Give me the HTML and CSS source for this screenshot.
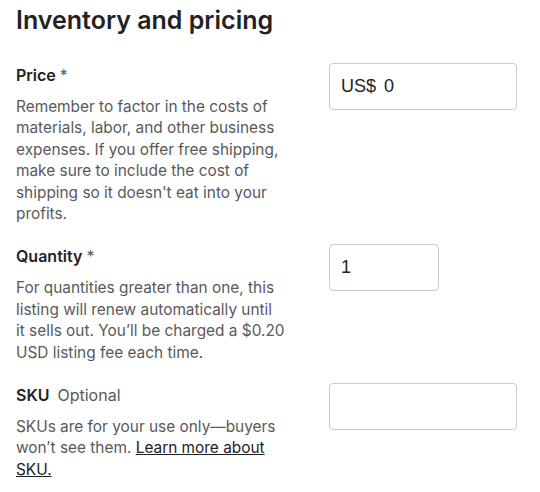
FILE: index.html
```html
<!DOCTYPE html>
<html>
<head>
<meta charset="utf-8">
<link rel="stylesheet" href="styles.css">
</head>
<body>
<div class="page">
  <h1 class="title">Inventory and pricing</h1>
  <div class="row">
    <div class="info">
      <div class="label">Price <span class="req">*</span></div>
      <p class="desc">Remember to factor in the costs of materials, labor, and other business expenses. If you offer free shipping, make sure to include the cost of shipping so it doesn't eat into your profits.</p>
    </div>
    <div class="field wide"><span class="prefix">US$</span><span class="val">0</span></div>
  </div>
  <div class="row">
    <div class="info">
      <div class="label">Quantity <span class="req">*</span></div>
      <p class="desc">For quantities greater than one, this listing will renew automatically until it&nbsp;sells out. You’ll be charged a $0.20 USD listing fee each time.</p>
    </div>
    <div class="field narrow"><span class="val">1</span></div>
  </div>
  <div class="row">
    <div class="info">
      <div class="label">SKU <span class="opt">Optional</span></div>
      <p class="desc">SKUs are for your use only—buyers won’t see them. <a class="link" href="#">Learn more about SKU.</a></p>
    </div>
    <div class="field wide"></div>
  </div>
</div>
</body>
</html>
```
FILE: styles.css
```css
html, body { margin: 0; padding: 0; background: #fff; }
body { font-family: Inter, "Noto Sans", sans-serif; color: #222; }
.page { padding: 0 16px; }
.title { margin: 0; padding-top: 2px; font-size: 25px; font-weight: 600; line-height: 36px; color: #222; }
.row { display: flex; align-items: flex-start; margin-top: 20px; }
.title + .row { margin-top: 25px; }
.info { width: 288px; flex: none; }
.label { font-size: 16px; font-weight: 600; line-height: 22px; margin-top: 1px; }
.req { color: #595959; font-weight: 400; }
.opt { color: #595959; font-weight: 400; margin-left: 4px; }
.desc { margin: 10px 0 0; font-size: 15.4px; line-height: 21.4px; color: #595959; }
.link { color: #222; text-decoration: underline; }
.field { margin-left: 25px; height: 45px; border: 1px solid #ccc; border-radius: 4px; box-sizing: content-box; display: flex; align-items: center; padding: 0 11px; font-family: "Liberation Sans", Arial, sans-serif; font-size: 18px; color: #222; }
.wide { width: 164px; }
.narrow { width: 86px; }
.prefix { margin-right: 8px; }
```
